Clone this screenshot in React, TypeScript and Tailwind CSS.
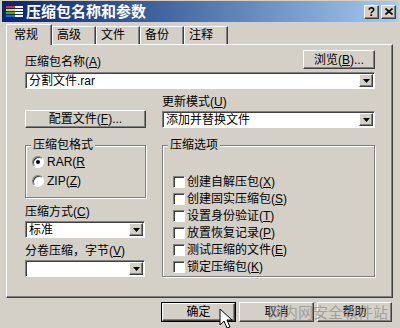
import clsx from 'clsx'

const raised =
  'bg-[#d4d0c8] border border-t-white border-l-white border-r-[#404040] border-b-[#404040] shadow-[inset_-1px_-1px_0_#808080]'
const sunken =
  'bg-white border border-t-[#808080] border-l-[#808080] border-r-white border-b-white shadow-[inset_1px_1px_0_#404040]'

function Arrow() {
  return (
    <svg width="7" height="4" viewBox="0 0 7 4">
      <path d="M0 0h7L3.5 4z" fill="#000" />
    </svg>
  )
}

function Combo({ value, className }: { value?: string; className?: string }) {
  return (
    <div className={clsx('flex h-[17px] p-[1px]', sunken, className)}>
      <div className="flex-1 pl-[2px] leading-[14px] whitespace-nowrap overflow-hidden">{value}</div>
      <div className={clsx('w-[14px] h-full flex items-center justify-center', raised)}>
        <Arrow />
      </div>
    </div>
  )
}

function Button({ children, className }: { children: React.ReactNode; className?: string }) {
  return (
    <div className={clsx('flex items-center justify-center', raised, className)}>{children}</div>
  )
}

function Radio({ checked, children }: { checked?: boolean; children: React.ReactNode }) {
  return (
    <div className="flex items-center h-[19px] gap-[3px]">
      <div className="w-[12px] h-[12px] rounded-full bg-white border border-t-[#808080] border-l-[#808080] border-r-white border-b-white shadow-[inset_1px_1px_0_#404040] flex items-center justify-center">
        {checked && <div className="w-[4px] h-[4px] rounded-full bg-black" />}
      </div>
      <span>{children}</span>
    </div>
  )
}

function Check({ children }: { children: React.ReactNode }) {
  return (
    <div className="flex items-center h-[17px] gap-[2px]">
      <div className={clsx('w-[12px] h-[12px]', sunken)} />
      <span>{children}</span>
    </div>
  )
}

function Group({ title, className, children }: { title: string; className?: string; children: React.ReactNode }) {
  return (
    <div
      className={clsx(
        'relative border border-[#808080] shadow-[inset_1px_1px_0_#fff,1px_1px_0_#fff]',
        className,
      )}
    >
      <span className="absolute -top-[8px] left-[5px] px-[2px] bg-[#d4d0c8] leading-[14px]">{title}</span>
      {children}
    </div>
  )
}

export default function App() {
  const tabs = ['高级', '文件', '备份', '注释']
  const options = [
    ['创建自解压包', 'X'],
    ['创建固实压缩包', 'S'],
    ['设置身份验证', 'T'],
    ['放置恢复记录', 'P'],
    ['测试压缩的文件', 'E'],
    ['锁定压缩包', 'K'],
  ]

  return (
    <div className="relative w-[400px] h-[328px] overflow-hidden bg-[#d4d0c8] text-[12px] text-black font-['Liberation_Sans','Noto_Sans_CJK_SC',sans-serif]">
      {/* title bar */}
      <div className="mx-[2px] mt-[1px] h-[21px] flex items-center pl-[4px] pr-[2px] bg-linear-to-r from-[#0a246a] to-[#a6caf0]">
        <svg width="17" height="14" viewBox="0 0 17 14">
          <rect x="0" y="1" width="9" height="2" fill="#e03030" />
          <rect x="0" y="4" width="9" height="2" fill="#f0d020" />
          <rect x="0" y="7" width="9" height="2" fill="#30b040" />
          <rect x="0" y="10" width="9" height="2" fill="#3060e0" />
          <rect x="9" y="1" width="8" height="2" fill="#fff" />
          <rect x="9" y="4" width="8" height="2" fill="#fff" />
          <rect x="9" y="7" width="8" height="2" fill="#fff" />
          <rect x="9" y="10" width="8" height="2" fill="#fff" />
        </svg>
        <span className="ml-[3px] text-white font-bold text-[15px] leading-[18px]">压缩包名称和参数</span>
        <div className="flex-1" />
        <Button className="w-[15px] h-[14px] font-bold text-[12px] leading-none">?</Button>
        <Button className="ml-[2px] w-[15px] h-[14px]">
          <svg width="8" height="7" viewBox="0 0 8 7">
            <path d="M0.5 0.5l7 6M7.5 0.5l-7 6" stroke="#000" strokeWidth="1.6" />
          </svg>
        </Button>
      </div>

      {/* tabs */}
      <div className="relative z-10 flex items-end h-[22px] pl-[6px]">
        <div className="-mb-[1px] w-[46px] h-[21px] pl-[7px] pt-[2px] bg-[#d4d0c8] border-t border-l border-t-white border-l-white border-r border-r-[#404040] shadow-[inset_-1px_0_0_#808080] leading-[16px]">
          常规
        </div>
        {tabs.map((t) => (
          <div
            key={t}
            className="w-[44px] h-[18px] pl-[4px] border-t border-l border-t-white border-l-white border-r border-r-[#404040] shadow-[inset_-1px_0_0_#808080] leading-[17px]"
          >
            {t}
          </div>
        ))}
      </div>

      {/* panel */}
      <div className="ml-[6px] w-[387px] h-[254px] border border-t-white border-l-white border-r-[#404040] border-b-[#404040] shadow-[inset_-1px_-1px_0_#808080] pl-[18px] pr-[17px] pt-[5px]">
        <div className="flex justify-between items-end h-[19px]">
          <span className="leading-[14px]">
            压缩包名称(<u>A</u>)
          </span>
          <Button className="w-[72px] h-[19px]">
            浏览(<u>B</u>)...
          </Button>
        </div>
        <Combo value="分割文件.rar" className="mt-[3px] w-[350px]" />

        <div className="mt-[6px] grid grid-cols-[121px_213px] gap-x-[16px]">
          <div className="pt-[15px]">
            <Button className="w-[121px] h-[18px]">
              配置文件(<u>F</u>)...
            </Button>
          </div>
          <div>
            <div className="h-[15px] leading-[14px]">
              更新模式(<u>U</u>)
            </div>
            <Combo value="添加并替换文件" className="mt-[1px]" />
          </div>
        </div>

        <div className="mt-[17px] grid grid-cols-[121px_213px] gap-x-[16px]">
          <div>
            <Group title="压缩包格式" className="h-[53px] pl-[6px] pt-[6px]">
              <Radio checked>
                RAR(<u>R</u>
              </Radio>
              <Radio>
                ZIP(<u>Z</u>)
              </Radio>
            </Group>
            <div className="mt-[7px] h-[14px] leading-[14px]">
              压缩方式(<u>C</u>)
            </div>
            <Combo value="标准" className="mt-[2px] w-[120px]" />
            <div className="mt-[6px] h-[14px] leading-[14px]">
              分卷压缩，字节(<u>V</u>)
            </div>
            <Combo className="mt-[2px] w-[120px]" />
          </div>
          <Group title="压缩选项" className="h-[132px] pl-[10px] pt-[27px]">
            {options.map(([label, key]) => (
              <Check key={key}>
                {label}(<u>{key}</u>)
              </Check>
            ))}
          </Group>
        </div>
      </div>

      {/* buttons */}
      <div className="mt-[4px] flex justify-end gap-[3px] pr-[8px]">
        <div className="border border-black">
          <Button className="w-[73px] h-[18px]">确定</Button>
        </div>
        <Button className="w-[75px] h-[20px]">取消</Button>
        <Button className="w-[75px] h-[20px]">帮助</Button>
      </div>

      {/* watermark */}
      <span className="absolute left-[268px] top-[304px] text-[15px] leading-[18px] text-[#8c8c8c] opacity-70 pointer-events-none">
        网内网安全软件站
      </span>

      {/* mouse cursor */}
      <svg className="absolute left-[219px] top-[308px]" width="14" height="22" viewBox="0 0 14 22">
        <path d="M1 1v16l4-4 3 7 3-1-3-7h5z" fill="#fff" stroke="#000" strokeWidth="1" strokeLinejoin="round" />
      </svg>
    </div>
  )
}
